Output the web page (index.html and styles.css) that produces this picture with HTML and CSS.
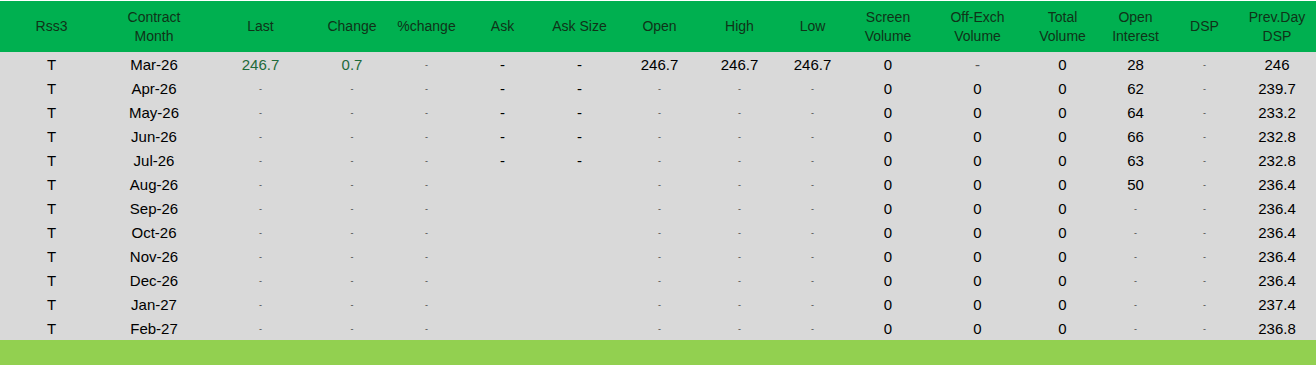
FILE: index.html
```html
<!DOCTYPE html>
<html lang="en">
<head>
    <meta charset="UTF-8">
    <meta name="viewport" content="width=device-width, initial-scale=1.0">
    <title>Rss3 Futures</title>
    <link rel="stylesheet" href="styles.css">
</head>
<body>
    <div class="board">
        <table class="quotes">
            <colgroup>
                <col style="width:103px"><col style="width:102px"><col style="width:111px"><col style="width:72px">
                <col style="width:77px"><col style="width:75px"><col style="width:79px"><col style="width:81px">
                <col style="width:79px"><col style="width:67px"><col style="width:84px"><col style="width:95px">
                <col style="width:75px"><col style="width:71px"><col style="width:67px"><col style="width:78px">
            </colgroup>
            <thead>
                <tr>
                    <th>Rss3</th>
                    <th>Contract<br>Month</th>
                    <th>Last</th>
                    <th>Change</th>
                    <th>%change</th>
                    <th>Ask</th>
                    <th>Ask Size</th>
                    <th>Open</th>
                    <th>High</th>
                    <th>Low</th>
                    <th>Screen<br>Volume</th>
                    <th>Off-Exch<br>Volume</th>
                    <th>Total<br>Volume</th>
                    <th>Open<br>Interest</th>
                    <th>DSP</th>
                    <th>Prev.Day<br>DSP</th>
                </tr>
            </thead>
            <tbody id="quoteRows">
                <!-- rows are filled in below -->
            </tbody>
        </table>
        <div class="footer-bar"></div>
    </div>

    <script>
        // s = small grey dash, d = normal dash, m = grey dash, '' = blank
        const rows = [
            ['Mar-26', 'g246.7', 'g0.7', 's', 'd', 'd', '246.7', '246.7', '246.7', '0', 'm', '0', '28', 's', '246'],
            ['Apr-26', 's', 's', 's', 'd', 'd', 's', 's', 's', '0', '0', '0', '62', 's', '239.7'],
            ['May-26', 's', 's', 's', 'd', 'd', 's', 's', 's', '0', '0', '0', '64', 's', '233.2'],
            ['Jun-26', 's', 's', 's', 'd', 'd', 's', 's', 's', '0', '0', '0', '66', 's', '232.8'],
            ['Jul-26', 's', 's', 's', 'd', 'd', 's', 's', 's', '0', '0', '0', '63', 's', '232.8'],
            ['Aug-26', 's', 's', 's', '', '', 's', 's', 's', '0', '0', '0', '50', 's', '236.4'],
            ['Sep-26', 's', 's', 's', '', '', 's', 's', 's', '0', '0', '0', 's', 's', '236.4'],
            ['Oct-26', 's', 's', 's', '', '', 's', 's', 's', '0', '0', '0', 's', 's', '236.4'],
            ['Nov-26', 's', 's', 's', '', '', 's', 's', 's', '0', '0', '0', 's', 's', '236.4'],
            ['Dec-26', 's', 's', 's', '', '', 's', 's', 's', '0', '0', '0', 's', 's', '236.4'],
            ['Jan-27', 's', 's', 's', '', '', 's', 's', 's', '0', '0', '0', 's', 's', '237.4'],
            ['Feb-27', 's', 's', 's', '', '', 's', 's', 's', '0', '0', '0', 's', 's', '236.8']
        ];

        function cell(value) {
            if (value === 's') return '<td><span class="dim">-</span></td>';
            if (value === 'd') return '<td><span class="dash">-</span></td>';
            if (value === 'm') return '<td><span class="grey">-</span></td>';
            if (value.startsWith('g')) return `<td class="up">${value.slice(1)}</td>`;
            return `<td>${value}</td>`;
        }

        const tableBody = document.getElementById('quoteRows');
        rows.forEach(row => {
            tableBody.innerHTML += `<tr><td>T</td>${row.map(cell).join('')}</tr>`;
        });
    </script>
</body>
</html>
```

FILE: styles.css
```css
body {
    margin: 0;
    padding: 0;
    background: #fff;
    font-family: 'Liberation Sans', Arial, sans-serif;
    font-size: 15px;
    color: #000;
}
.board {
    padding-top: 1px;
}
.quotes {
    width: 1316px;
    border-collapse: collapse;
    table-layout: fixed;
}
.quotes th {
    height: 51px;
    padding: 0;
    background: #00b050;
    color: #0f3318;
    font-size: 14px;
    font-weight: normal;
    line-height: 19px;
    text-align: center;
}
.quotes tbody tr {
    height: 24px;
}
.quotes td {
    height: 23px;
    padding: 1px 0 0;
    background: #d9d9d9;
    text-align: center;
    vertical-align: middle;
    line-height: 16px;
}
.quotes td.up {
    color: #1e6a3a;
}
.dim {
    display: inline-block;
    font-size: 9px;
    line-height: 9px;
    color: #444;
    vertical-align: middle;
}
.dash {
    color: #000;
}
.grey {
    color: #555;
}
.footer-bar {
    height: 25px;
    background: #92d050;
}
```
